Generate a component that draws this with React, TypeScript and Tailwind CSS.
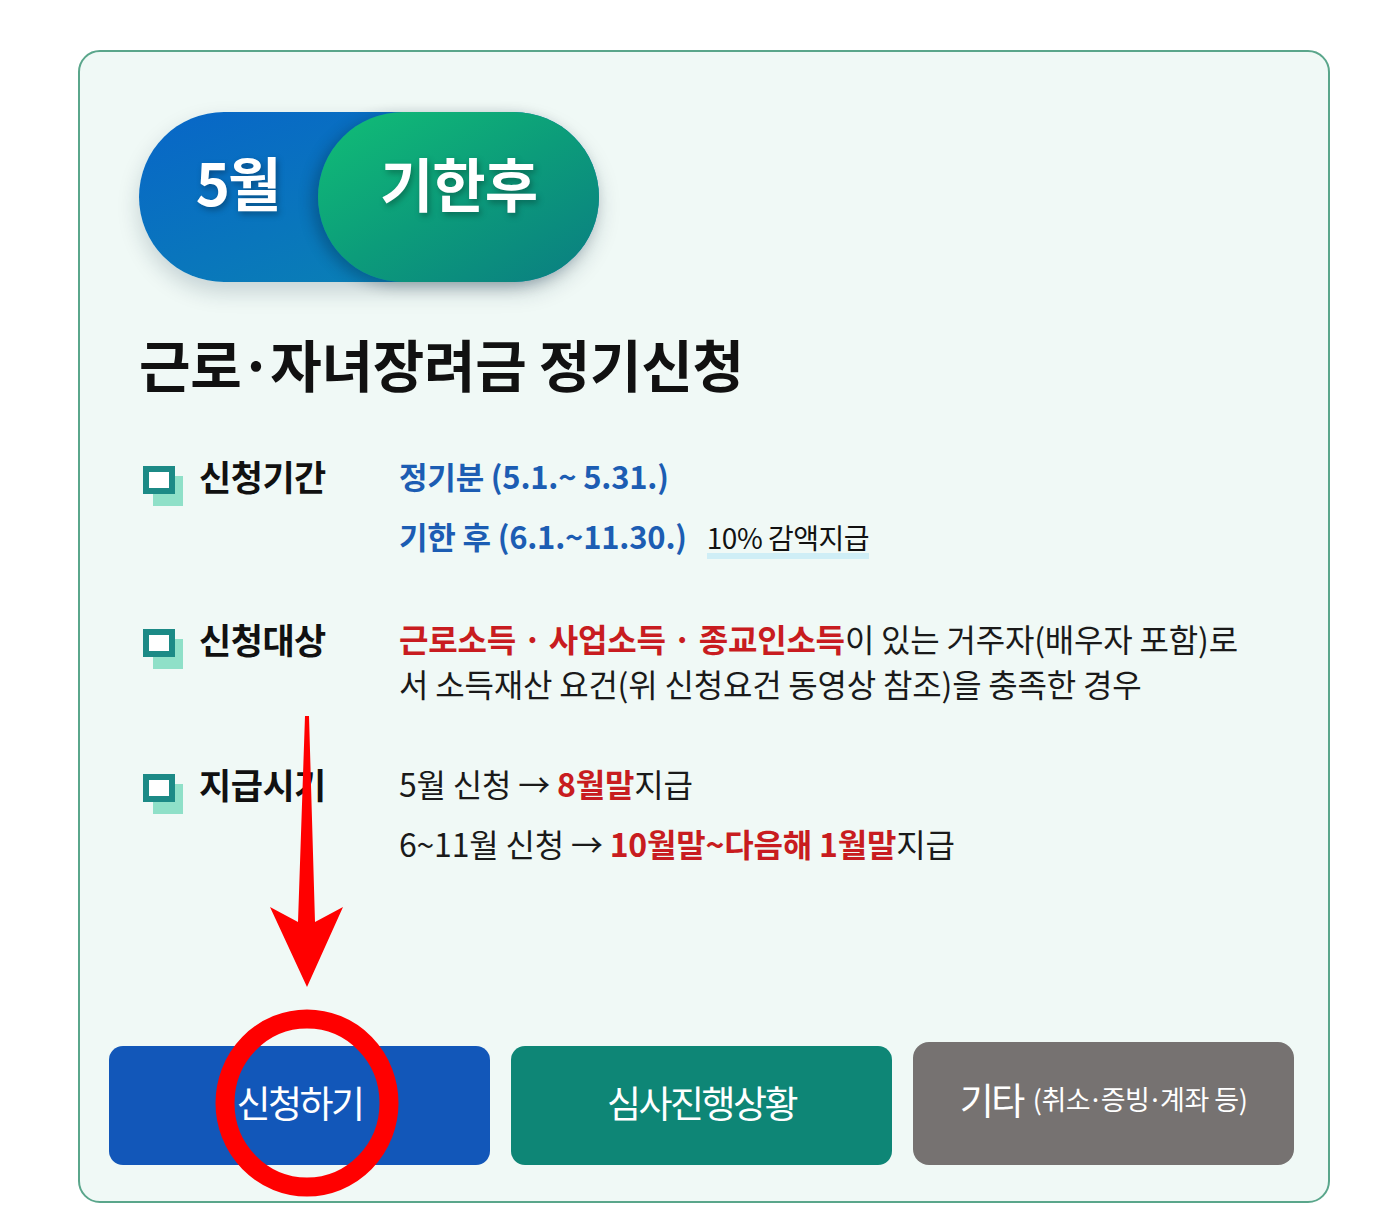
import React from "react";

const font = "font-['Noto_Sans_CJK_KR','Noto_Sans',sans-serif]";

function SquareIcon() {
  return (
    <div className="relative w-[40px] h-[40px] shrink-0 mt-[13px]">
      <div className="absolute left-[10px] top-[10px] w-[30px] h-[30px] bg-[#8fe0c8]" />
      <div className="absolute left-0 top-0 w-[32px] h-[28px] border-[6px] border-[#1c8a86] bg-white" />
    </div>
  );
}

function Row({ label, children, className = "" }: { label: string; children: React.ReactNode; className?: string }) {
  return (
    <div className={`flex ${className}`}>
      <div className="flex w-[260px] shrink-0 pl-[4px]">
        <SquareIcon />
        <div className="ml-[16px] text-[35px] leading-[45px] font-bold text-[#111] tracking-[-0.5px]">{label}</div>
      </div>
      <div className="flex flex-col text-[32px] text-[#1a1a1a] tracking-[-0.2px]">{children}</div>
    </div>
  );
}

export default function App() {
  return (
    <div className={`relative w-[1376px] h-[1210px] bg-white overflow-hidden ${font}`}>
      <div className="ml-[78px] pt-[50px]">
        <div className="w-[1252px] h-[1153px] border-2 border-[#5aa68b] rounded-[22px] bg-[#f0f9f6] flex flex-col">
          <div className="pl-[59px] pt-[60px]">
            {/* pill */}
            <div className="w-[460px] h-[170px] rounded-full bg-[linear-gradient(160deg,#0866c8_0%,#0a86b0_100%)] flex shadow-[0_10px_22px_rgba(0,40,60,0.18)]">
              <div className="flex-1 flex items-center justify-center pl-[18px] pb-[32px]">
                <span className="text-white text-[58px] font-bold tracking-[-2px] leading-none drop-shadow-[2px_3px_3px_rgba(0,0,0,0.3)]">5월</span>
              </div>
              <div className="w-[281px] h-full rounded-full bg-[linear-gradient(150deg,#11be76_0%,#0c9c7a_50%,#0a7d82_100%)] flex items-center justify-center pb-[30px] shadow-[-6px_4px_14px_rgba(0,30,50,0.3)]">
                <span className="text-white text-[58px] font-bold tracking-[-1px] leading-none drop-shadow-[2px_3px_3px_rgba(0,0,0,0.3)]">기한후</span>
              </div>
            </div>

            <div className="mt-[53px] text-[56px] leading-[56px] font-bold text-[#111] tracking-[-0.3px]">
              근로<span className="mx-[-2px]">·</span>자녀장려금 정기신청
            </div>

            <div className="mt-[62px]">
              <Row label="신청기간">
                <div className="leading-[45px] font-bold text-[#1c5db3] text-[31px]">정기분 (5.1.~ 5.31.)</div>
                <div className="mt-[15px] leading-[45px] flex items-baseline">
                  <span className="font-bold text-[#1c5db3] text-[31px]">기한 후 (6.1.~11.30.)</span>
                  <span className="ml-[20px] text-[28px] leading-[32px] tracking-[-0.5px] inline-block border-b-[6px] border-[#cfeef6] text-[#111]">10% 감액지급</span>
                </div>
              </Row>

              <Row label="신청대상" className="mt-[57px]">
                <div className="leading-[45px]">
                  <span className="font-bold text-[#c81c20]">근로소득 · 사업소득 · 종교인소득</span>이 있는 거주자(배우자 포함)로
                </div>
                <div className="leading-[45px]">서 소득재산 요건(위 신청요건 동영상 참조)을 충족한 경우</div>
              </Row>

              <Row label="지급시기" className="mt-[55px]">
                <div className="leading-[45px]">
                  5월 신청 → <span className="font-bold text-[#c81c20]">8월말</span>지급
                </div>
                <div className="mt-[15px] leading-[45px]">
                  6~11월 신청 → <span className="font-bold text-[#c81c20]">10월말~다음해 1월말</span>지급
                </div>
              </Row>
            </div>
          </div>

          <div className="mt-auto pl-[29px] pb-[36px] flex items-end gap-[21px]">
            <div className="w-[381px] h-[119px] rounded-[14px] bg-[#1257b9] flex items-center justify-center pb-[6px] text-white text-[37px] tracking-[-2.5px]">신청하기</div>
            <div className="w-[381px] h-[119px] rounded-[14px] bg-[#0e8676] flex items-center justify-center pb-[6px] text-white text-[37px] tracking-[-2.5px]">심사진행상황</div>
            <div className="w-[381px] h-[123px] rounded-[16px] bg-[#767271] flex items-center justify-center pb-[8px] text-white">
              <span className="text-[37px] tracking-[-2.5px]">기타</span>
              <span className="ml-[10px] text-[27px] tracking-[-0.5px]">(취소<span className="mx-[-2px]">·</span>증빙<span className="mx-[-2px]">·</span>계좌 등)</span>
            </div>
          </div>
        </div>
      </div>

      {/* annotation overlay */}
      <svg className="absolute left-0 top-0 pointer-events-none" width="1376" height="1210" viewBox="0 0 1376 1210">
        <polygon points="305,716 309,716 315,922 343,907 307,987 270,907 298,922" fill="#ff0000" />
        <ellipse cx="307" cy="1103" rx="82" ry="84" fill="none" stroke="#ff0000" strokeWidth="19" />
      </svg>
    </div>
  );
}
